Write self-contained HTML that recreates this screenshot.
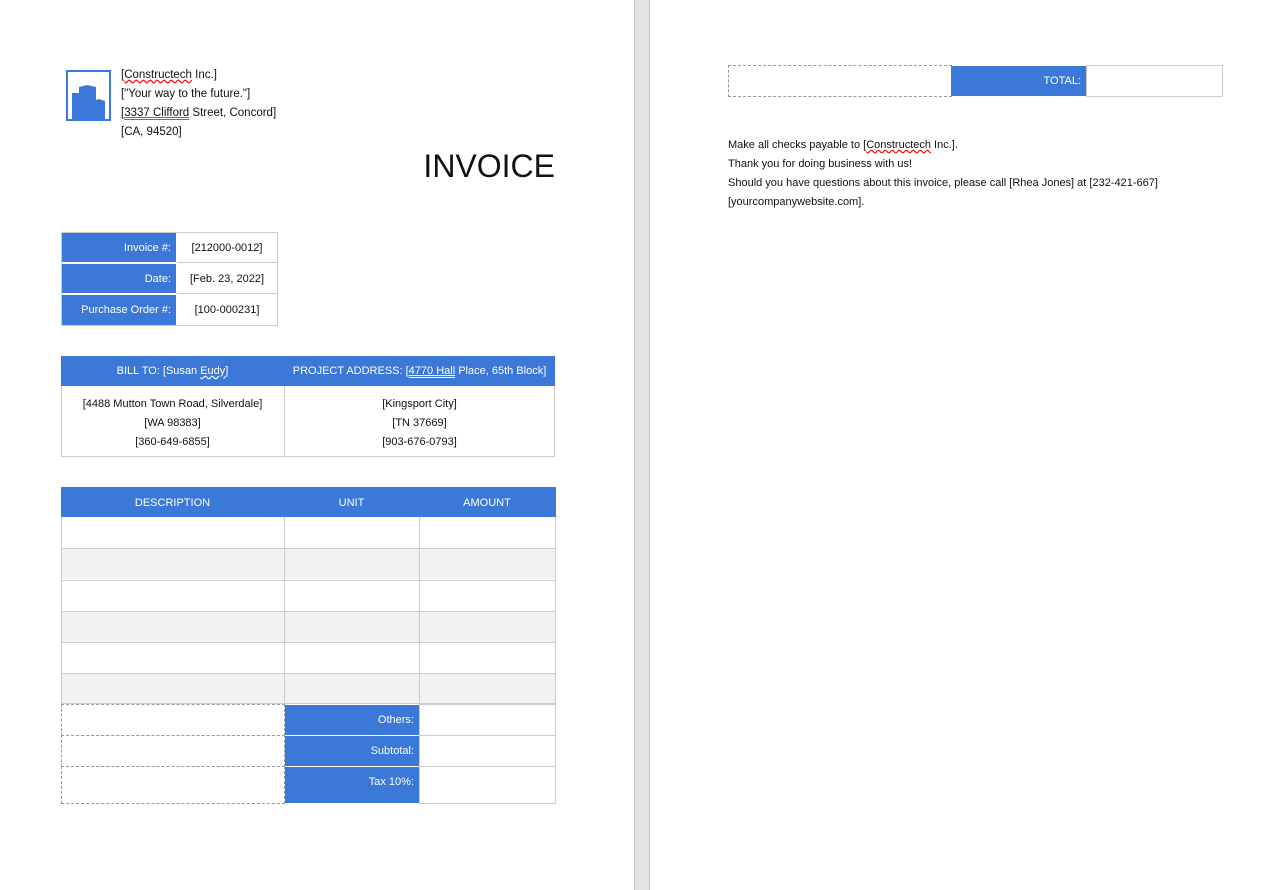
<!DOCTYPE html><html><head><style>
*{margin:0;padding:0;box-sizing:border-box}
body{width:1274px;height:890px;background:#fff;position:relative;overflow:hidden;font-family:"Liberation Sans",sans-serif;font-size:11px;color:#111}
.a{position:absolute}
.b{background:#3c78d8;color:#fff}
.c{position:absolute;border:1px solid #ccc}
.t{position:absolute;display:flex;align-items:center;font-size:11px}
</style></head><body>
<div class="a" style="left:634px;top:0;width:16px;height:890px;background:#e3e3e3;border-left:1px solid #c8c8c8;border-right:1px solid #c8c8c8"></div>
<!-- logo -->
<div class="a" style="left:66px;top:70px;width:45px;height:51px;border:2px solid #3c78d8"></div>
<svg class="a" style="left:68px;top:72px" width="41" height="47"><path d="M4 47V21h7v-6l8-2 9 2v13l3-1 6 2v19z" fill="#3c78d8"/></svg>
<div class="a" style="left:121px;top:66px;line-height:19px;font-size:11.5px">[<span style="text-decoration:underline wavy red">Constructech</span> Inc.]<br>["Your way to the future."]<br>[<span style="text-decoration:underline double #3c78d8">3337 Clifford</span> Street, Concord]<br>[CA, 94520]</div>
<div class="a" style="right:719px;top:148px;font-size:32px;color:#111">INVOICE</div>
<!-- info -->
<div class="c" style="left:61px;top:232px;width:217px;height:94px"></div>
<div class="t b" style="left:62px;top:233px;width:114px;height:29px;justify-content:flex-end;padding-right:5px">Invoice #:</div>
<div class="t b" style="left:62px;top:264px;width:114px;height:29px;justify-content:flex-end;padding-right:5px">Date:</div>
<div class="t b" style="left:62px;top:295px;width:114px;height:30px;justify-content:flex-end;padding-right:5px">Purchase Order #:</div>
<div class="t" style="left:177px;top:233px;width:100px;height:30px;justify-content:center;border-bottom:1px solid #ccc">[212000-0012]</div>
<div class="t" style="left:177px;top:264px;width:100px;height:30px;justify-content:center;border-bottom:1px solid #ccc">[Feb. 23, 2022]</div>
<div class="t" style="left:177px;top:295px;width:100px;height:30px;justify-content:center">[100-000231]</div>
<!-- bill -->
<div class="c" style="left:61px;top:356px;width:494px;height:101px"></div>
<div class="t b" style="left:61px;top:356px;width:494px;height:30px"></div>
<div class="t" style="left:61px;top:356px;width:223px;height:30px;justify-content:center;color:#fff">BILL TO: [Susan&nbsp;<span style="text-decoration:underline wavy #fff">Eudy</span>]</div>
<div class="t" style="left:284px;top:356px;width:271px;height:30px;justify-content:center;color:#fff">PROJECT ADDRESS: [<span style="text-decoration:underline double">4770 Hall</span>&nbsp;Place, 65th Block]</div>
<div class="a" style="left:284px;top:386px;width:1px;height:70px;background:#ccc"></div>
<div class="a" style="left:61px;top:395px;width:223px;text-align:center;line-height:19px">[4488 Mutton Town Road, Silverdale]<br>[WA 98383]<br>[360-649-6855]</div>
<div class="a" style="left:284px;top:395px;width:271px;text-align:center;line-height:19px">[Kingsport City]<br>[TN 37669]<br>[903-676-0793]</div>
<!-- items -->
<div class="t b" style="left:61px;top:487px;width:495px;height:30px"></div>
<div class="t" style="left:61px;top:488px;width:223px;height:30px;justify-content:center;color:#fff">DESCRIPTION</div>
<div class="t" style="left:284px;top:488px;width:135px;height:30px;justify-content:center;color:#fff">UNIT</div>
<div class="t" style="left:419px;top:488px;width:136px;height:30px;justify-content:center;color:#fff">AMOUNT</div>
<div class="a" style="left:61px;top:517px;width:495px;height:187px;border:1px solid #ccc;border-top:none;background:linear-gradient(#fff 0 31px,#f2f2f2 31px 62px,#fff 62px 94px,#f2f2f2 94px 125px,#fff 125px 156px,#f2f2f2 156px)"></div>
<div class="a" style="left:62px;top:548px;width:493px;height:1px;background:#ccc"></div>
<div class="a" style="left:62px;top:580px;width:493px;height:1px;background:#ccc"></div>
<div class="a" style="left:62px;top:611px;width:493px;height:1px;background:#ccc"></div>
<div class="a" style="left:62px;top:642px;width:493px;height:1px;background:#ccc"></div>
<div class="a" style="left:62px;top:673px;width:493px;height:1px;background:#ccc"></div>
<div class="a" style="left:284px;top:517px;width:1px;height:187px;background:#ccc"></div>
<div class="a" style="left:419px;top:517px;width:1px;height:187px;background:#ccc"></div>
<div class="a" style="left:61px;top:704px;width:224px;height:32px;border:1px dashed #999"></div>
<div class="a" style="left:61px;top:735px;width:224px;height:32px;border:1px dashed #999"></div>
<div class="a" style="left:61px;top:766px;width:224px;height:38px;border:1px dashed #999"></div>
<div class="t b" style="left:285px;top:705px;width:134px;height:30px;justify-content:flex-end;padding-right:5px">Others:</div>
<div class="t b" style="left:285px;top:736px;width:134px;height:30px;justify-content:flex-end;padding-right:5px">Subtotal:</div>
<div class="t b" style="left:285px;top:767px;width:134px;height:36px;align-items:flex-start;padding-top:9px;justify-content:flex-end;padding-right:5px">Tax 10%:</div>
<div class="c" style="left:419px;top:704px;width:137px;height:32px"></div>
<div class="c" style="left:419px;top:735px;width:137px;height:32px"></div>
<div class="c" style="left:419px;top:766px;width:137px;height:38px"></div>
<!-- page 2 -->
<div class="a" style="left:728px;top:65px;width:224px;height:32px;border:1px dashed #999"></div>
<div class="t b" style="left:951px;top:66px;width:135px;height:30px;justify-content:flex-end;padding-right:5px">TOTAL:</div>
<div class="c" style="left:1086px;top:65px;width:137px;height:32px"></div>
<div class="a" style="left:728px;top:136px;line-height:19px">Make all checks payable to [<span style="text-decoration:underline wavy red">Constructech</span> Inc.].<br>Thank you for doing business with us!<br>Should you have questions about this invoice, please call [Rhea Jones] at [232-421-667]<br>[yourcompanywebsite.com].</div>
</body></html>
